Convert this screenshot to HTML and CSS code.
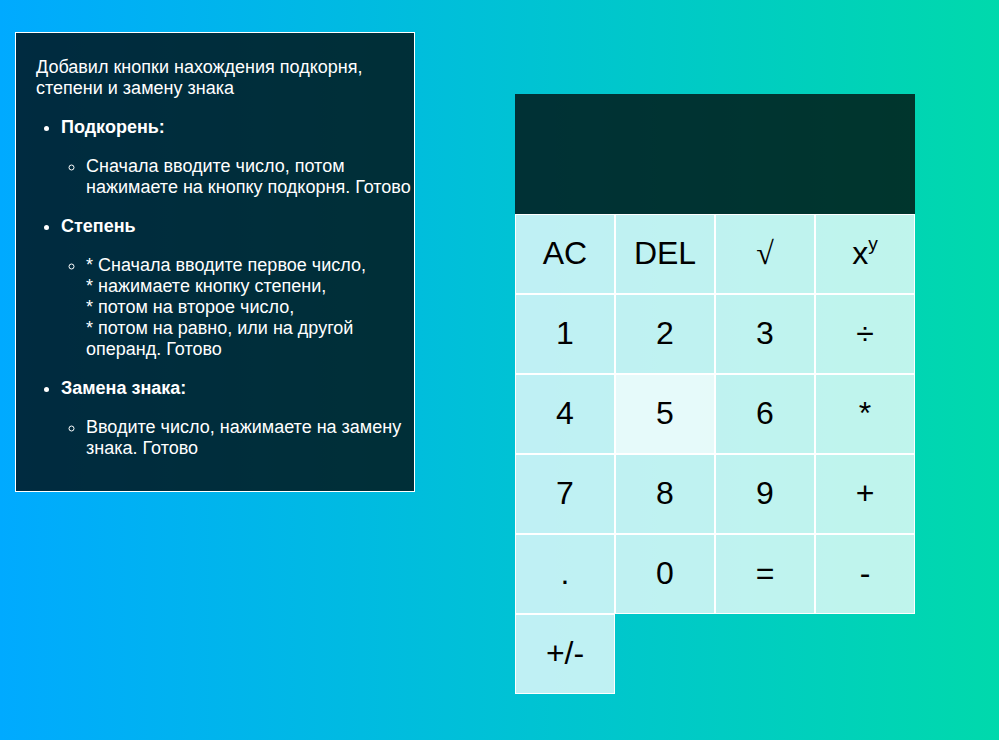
FILE: index.html
```html
<!DOCTYPE html>
<html lang="ru">
<head>
<meta charset="utf-8">
<title>Калькулятор</title>
<link rel="stylesheet" href="styles.css">
</head>
<body>
<div class="page">
  <div class="info">
    <p>Добавил кнопки нахождения подкорня, степени и замену знака</p>
    <ul class="list">
      <li><b>Подкорень:</b>
        <ul class="sub">
          <li>Сначала вводите число, потом нажимаете на кнопку подкорня. Готово</li>
        </ul>
      </li>
      <li><b>Степень</b>
        <ul class="sub">
          <li>* Сначала вводите первое число,<br>* нажимаете кнопку степени,<br>* потом на второе число,<br>* потом на равно, или на другой операнд. Готово</li>
        </ul>
      </li>
      <li><b>Замена знака:</b>
        <ul class="sub">
          <li>Вводите число, нажимаете на замену знака. Готово</li>
        </ul>
      </li>
    </ul>
  </div>
  <div class="calculator">
    <div class="output">
      <div class="previous"></div>
      <div class="current"></div>
    </div>
    <button class="key">AC</button>
    <button class="key">DEL</button>
    <button class="key key-root">√</button>
    <button class="key">x<sup class="power">y</sup></button>
    <button class="key">1</button>
    <button class="key">2</button>
    <button class="key">3</button>
    <button class="key">÷</button>
    <button class="key">4</button>
    <button class="key key-hover">5</button>
    <button class="key">6</button>
    <button class="key">*</button>
    <button class="key">7</button>
    <button class="key">8</button>
    <button class="key">9</button>
    <button class="key">+</button>
    <button class="key">.</button>
    <button class="key">0</button>
    <button class="key">=</button>
    <button class="key">-</button>
    <button class="key">+/-</button>
  </div>
</div>
</body>
</html>
```
FILE: styles.css
```css
html, body {
  margin: 0;
  padding: 0;
}

body {
  min-height: 100vh;
  background: linear-gradient(to right, #00aaff, #00d9ac);
  font-family: "Liberation Sans", Arial, sans-serif;
}

.page {
  display: flex;
  align-items: flex-start;
  gap: 100px;
  padding: 32px 0 0 15px;
}

.info {
  box-sizing: border-box;
  width: 400px;
  flex: 0 0 400px;
  padding: 6px 0 14px 20px;
  border: 1px solid #fff;
  background: rgba(0, 0, 0, 0.75);
  color: #fff;
  font-size: 18px;
}

.info p {
  margin: 18px 0;
}

.list {
  margin: 18px 0;
  padding-left: 25px;
  list-style: disc;
}

.sub {
  margin: 18px 0;
  padding-left: 25px;
  list-style: circle;
}

.calculator {
  margin-top: 62px;
  display: grid;
  grid-template-columns: repeat(4, 100px);
  grid-template-rows: minmax(120px, auto) repeat(6, 80px);
}

.output {
  grid-column: 1 / -1;
  background: rgba(0, 0, 0, 0.75);
  display: flex;
  flex-direction: column;
  align-items: flex-end;
  justify-content: space-around;
  padding: 10px;
  word-wrap: break-word;
  word-break: break-all;
}

.key {
  font-family: "Liberation Sans", Arial, sans-serif;
  font-size: 32px;
  color: #000;
  border: 1px solid #fff;
  outline: none;
  background: rgba(255, 255, 255, 0.75);
  cursor: pointer;
  padding: 0 0 2px;
  margin: 0;
}

.key-root {
  font-family: "Liberation Serif", "Times New Roman", serif;
}

.power {
  font-size: 0.6em;
  line-height: 0;
  vertical-align: 0.75em;
}

.key-hover {
  background: rgba(255, 255, 255, 0.9);
}
```
